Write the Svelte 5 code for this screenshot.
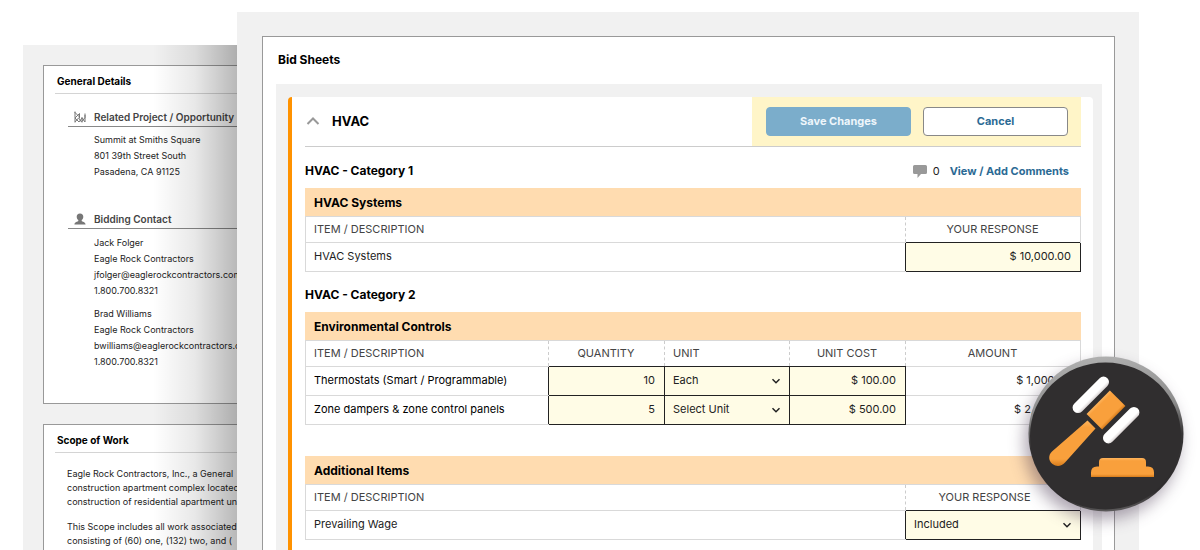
<script lang="ts">
  const contacts: { name: string; company: string; email: string; phone: string }[] = [
    {
      name: 'Jack Folger',
      company: 'Eagle Rock Contractors',
      email: 'jfolger@eaglerockcontractors.com',
      phone: '1.800.700.8321',
    },
    {
      name: 'Brad Williams',
      company: 'Eagle Rock Contractors',
      email: 'bwilliams@eaglerockcontractors.com',
      phone: '1.800.700.8321',
    },
  ]

  let controls = $state([
    {
      name: 'Thermostats (Smart / Programmable)',
      quantity: '10',
      unit: 'Each',
      cost: '$ 100.00',
      amount: '$ 1,000.00',
    },
    {
      name: 'Zone dampers & zone control panels',
      quantity: '5',
      unit: 'Select Unit',
      cost: '$ 500.00',
      amount: '$ 2,500.00',
    },
  ])

  let systemsResponse = $state('$ 10,000.00')
  let wage = $state('Included')
  let open = $state(true)
</script>

{#snippet chevron()}
  <svg class="chevron" viewBox="0 0 10 10" aria-hidden="true"><path d="M1.5 3.2 5 6.7l3.5-3.5" /></svg>
{/snippet}

<div class="page">
  <aside class="details">
    <section class="box general">
      <h2>General Details</h2>
      <div class="group">
        <h3>
          <svg class="icon" viewBox="0 0 12 12" aria-hidden="true">
            <path
              class="line"
              d="M1 .5v11M5.500 2.500v5M.5 1l5 5M5.500 2.500 1 7l4 4M5 6.500 1 11M5 7.500l2.500 3.500L11 6.500V2.500M8 6v5.500M5 11l3-4 3 4V4"
            />
          </svg>
          Related Project / Opportunity
        </h3>
        <address>
          <div>Summit at Smiths Square</div>
          <div>801 39th Street South</div>
          <div>Pasadena, CA 91125</div>
        </address>
      </div>
      <div class="group">
        <h3>
          <svg class="icon" viewBox="0 0 12 12" aria-hidden="true">
            <path
              d="M6 .5c2.200 0 3.300 1.400 3.300 3.200 0 1.500-.7 2.700-1.600 3.300v.9c.4.9 3.900.8 3.900 3.600H.4c0-2.800 3.500-2.700 3.900-3.600V7C3.400 6.400 2.700 5.200 2.700 3.700 2.700 1.900 3.800.5 6 .5z"
            />
          </svg>
          Bidding Contact
        </h3>
        {#each contacts as contact}
          <address>
            <div>{contact.name}</div>
            <div>{contact.company}</div>
            <div>{contact.email}</div>
            <div>{contact.phone}</div>
          </address>
        {/each}
      </div>
    </section>
    <section class="box scope">
      <h2>Scope of Work</h2>
      <p>
        Eagle Rock Contractors, Inc., a General<br />construction apartment complex located<br
        />construction of residential apartment units
      </p>
      <p>This Scope includes all work associated<br />consisting of (60) one, (132) two, and (</p>
    </section>
  </aside>

  <main class="sheets">
    <section class="box bid">
      <h1>Bid Sheets</h1>
      <div class="well">
        <div class="card">
          <header>
            <button class="toggle" type="button" aria-expanded={open} onclick={() => (open = !open)}>
              <svg viewBox="0 0 14 10" aria-hidden="true"><path d="M1.500 8 7 2.500 12.500 8" /></svg>
              HVAC
            </button>
            <div class="actions">
              <button class="btn save" type="button">Save Changes</button>
              <button class="btn" type="button">Cancel</button>
            </div>
          </header>

          {#if open}
            <div class="category">
              <h4>HVAC - Category 1</h4>
              <div class="comments">
                <svg viewBox="0 0 14 14" aria-hidden="true">
                  <path
                    d="M1.500 1h11A1.500 1.500 0 0 1 14 2.500v6a1.500 1.500 0 0 1-1.500 1.500H8l-3.500 4V10h-3A1.500 1.500 0 0 1 0 8.500v-6A1.500 1.500 0 0 1 1.500 1z"
                  />
                </svg>
                <span>0</span>
                <a href="#comments">View / Add Comments</a>
              </div>
            </div>
            <table>
              <colgroup><col /><col class="wide" /></colgroup>
              <thead>
                <tr class="title"><th colspan="2">HVAC Systems</th></tr>
                <tr class="labels"><th class="left">ITEM / DESCRIPTION</th><th>YOUR RESPONSE</th></tr>
              </thead>
              <tbody>
                <tr>
                  <td class="name">HVAC Systems</td>
                  <td class="field"><input aria-label="HVAC Systems response" bind:value={systemsResponse} /></td>
                </tr>
              </tbody>
            </table>

            <div class="category">
              <h4>HVAC - Category 2</h4>
            </div>
            <table>
              <colgroup>
                <col /><col class="narrow" /><col class="unit" /><col class="narrow" /><col class="wide" />
              </colgroup>
              <thead>
                <tr class="title"><th colspan="5">Environmental Controls</th></tr>
                <tr class="labels">
                  <th class="left">ITEM / DESCRIPTION</th>
                  <th>QUANTITY</th>
                  <th class="left">UNIT</th>
                  <th>UNIT COST</th>
                  <th>AMOUNT</th>
                </tr>
              </thead>
              <tbody>
                {#each controls as item}
                  <tr>
                    <td class="name strong">{item.name}</td>
                    <td class="field"><input aria-label="Quantity" bind:value={item.quantity} /></td>
                    <td class="field">
                      <div class="select">
                        <select aria-label="Unit" bind:value={item.unit}>
                          <option>Select Unit</option>
                          <option>Each</option>
                        </select>
                        {@render chevron()}
                      </div>
                    </td>
                    <td class="field"><input aria-label="Unit cost" bind:value={item.cost} /></td>
                    <td class="amount">{item.amount}</td>
                  </tr>
                {/each}
              </tbody>
            </table>

            <table class="additional">
              <colgroup><col /><col class="wide" /></colgroup>
              <thead>
                <tr class="title"><th colspan="2">Additional Items</th></tr>
                <tr class="labels"><th class="left">ITEM / DESCRIPTION</th><th>YOUR RESPONSE</th></tr>
              </thead>
              <tbody>
                <tr>
                  <td class="name">Prevailing Wage</td>
                  <td class="field">
                    <div class="select">
                      <select aria-label="Prevailing Wage response" bind:value={wage}>
                        <option>Included</option>
                      </select>
                      {@render chevron()}
                    </div>
                  </td>
                </tr>
              </tbody>
            </table>
          {/if}
        </div>
      </div>
    </section>
  </main>

  <svg class="badge" viewBox="0 0 156 156" aria-hidden="true">
    <defs>
      <linearGradient id="rim" x1="0.400" y1="0" x2="0.500" y2="1">
        <stop offset="0" stop-color="#b0b0b0" />
        <stop offset="0.350" stop-color="#8a8a8a" />
        <stop offset="0.550" stop-color="#353334" />
        <stop offset="0.900" stop-color="#2d2b2c" />
        <stop offset="1" stop-color="#5c5a5b" />
      </linearGradient>
      <linearGradient id="white" x1="0" y1="0" x2="0" y2="1">
        <stop offset="0" stop-color="#fff" />
        <stop offset="0.700" stop-color="#fff" />
        <stop offset="1" stop-color="#d8d2d2" />
      </linearGradient>
      <linearGradient id="orange" x1="0" y1="0" x2="0" y2="1">
        <stop offset="0" stop-color="#ffb55d" />
        <stop offset="0.150" stop-color="#f9a03c" />
        <stop offset="0.850" stop-color="#f9a03c" />
        <stop offset="1" stop-color="#d67c1c" />
      </linearGradient>
    </defs>
    <circle cx="78" cy="78" r="77.500" fill="url(#rim)" />
    <ellipse cx="77.500" cy="80" rx="75.500" ry="73.500" fill="#302e2f" />
    <g transform="rotate(-45 78 54)">
      <rect x="54.500" y="27" width="47" height="11" rx="5.500" fill="url(#white)" />
      <rect x="61.500" y="43" width="33" height="22" fill="url(#orange)" />
      <rect x="54.500" y="70" width="47" height="11" rx="5.500" fill="url(#white)" />
    </g>
    <path fill="url(#orange)" d="m59.500 64.500 8 8-30.500 34c-3.500 4-8.500 4.500-12.500 1.500s-4.500-9-.5-12.500z" />
    <path
      fill="url(#orange)"
      d="M75 102h39q4 0 4 4v4.500h2q6 0 6 6v4.500H63v-4.500q0-6 6-6h2V106q0-4 4-4z"
    />
  </svg>
</div>

<style>
  :global(body) {
    margin: 0;
    background: #fff;
  }
  * {
    box-sizing: border-box;
  }
  .page {
    position: relative;
    display: flex;
    height: 100vh;
    overflow: hidden;
    font-family: Inter, 'Liberation Sans', sans-serif;
    font-size: 11px;
    line-height: 16px;
    color: #222;
  }
  h1,
  h2,
  h3,
  h4,
  p {
    margin: 0;
  }
  .box {
    background: #fff;
    border: 1px solid #999;
  }
  .details {
    position: relative;
    flex: 0 0 214px;
    margin: 45px 0 0 23px;
    padding: 20px 0 0 20px;
    overflow: hidden;
    background: #f1f1f1;
    font-size: 9px;
    white-space: nowrap;
  }
  .details::after {
    content: '';
    position: absolute;
    inset: 0 0 0 auto;
    width: 84px;
    background: linear-gradient(to right, transparent, rgba(0, 0, 0, 0.09) 50%, rgba(0, 0, 0, 0.28));
  }
  .details .box {
    margin-bottom: 20px;
    padding: 6px 0 0 11px;
    border-right: 0;
  }
  .details .general {
    padding-bottom: 26px;
  }
  .details .scope {
    padding-bottom: 80px;
  }
  .details h2 {
    padding: 1px 2px 4px;
    border-bottom: 1px solid #d4d4d4;
    font-size: 10px;
    font-weight: 700;
    color: #000;
  }
  .group {
    margin: 14px 0 0 13px;
  }
  .group + .group {
    margin-top: 30px;
  }
  .group h3 {
    display: flex;
    align-items: center;
    gap: 8px;
    height: 19px;
    margin-bottom: 5px;
    padding-left: 6px;
    border-bottom: 1px solid #888;
    font-size: 10px;
    font-weight: 600;
    color: #444;
  }
  .group + .group h3 {
    margin-bottom: 6px;
  }
  .icon {
    width: 12px;
    height: 12px;
    fill: #777;
  }
  .icon .line {
    fill: none;
    stroke: #777;
  }
  address {
    margin-bottom: 7px;
    padding-left: 26px;
    font-style: normal;
  }
  .scope p {
    margin: 14px 0 0 12px;
    line-height: 14px;
  }
  .scope p + p {
    margin-top: 11px;
  }
  .sheets {
    flex: 1;
    min-width: 0;
    margin: 12px 61px 0 0;
    padding: 24px 24px 0 25px;
    background: #f1f1f1;
  }
  .bid {
    padding: 15px 12px 12px 13px;
  }
  .bid h1 {
    padding-left: 2px;
    font-size: 12px;
    font-weight: 700;
    color: #000;
  }
  .well {
    margin-top: 16px;
    padding: 13px 9px 12px 12px;
    background: #f1f1f1;
  }
  .card {
    padding: 0 12px 40px 13px;
    background: #fff;
    border-left: 4px solid #ff9200;
    border-radius: 4px;
  }
  .card header {
    display: flex;
    justify-content: space-between;
    height: 50px;
    margin-bottom: 1px;
    border-bottom: 1px solid #ccc;
  }
  button {
    font: inherit;
    cursor: pointer;
  }
  .toggle {
    display: flex;
    align-items: center;
    gap: 12px;
    padding: 0 1px 2px;
    border: 0;
    background: none;
    font-size: 13px;
    font-weight: 700;
    color: #000;
  }
  .toggle svg {
    width: 14px;
    height: 10px;
    fill: none;
    stroke: #999;
    stroke-width: 2;
  }
  .actions {
    display: flex;
    align-items: center;
    gap: 12px;
    padding: 0 13px 0 14px;
    background: #fff5c8;
  }
  .btn {
    width: 145px;
    height: 29px;
    padding: 0 0 2px;
    border: 1px solid #888;
    border-radius: 4px;
    background: #fff;
    font-weight: 700;
    color: #2b6a94;
  }
  .save {
    border-color: #7badcb;
    background: #7badcb;
    color: #eef6fb;
  }
  .category {
    display: flex;
    align-items: center;
    justify-content: space-between;
    height: 40px;
    padding: 6px 12px 0 0;
  }
  h4 {
    font-size: 12px;
    font-weight: 700;
    color: #000;
  }
  .comments {
    display: flex;
    align-items: center;
    gap: 6px;
  }
  .comments svg {
    width: 14px;
    height: 14px;
    fill: #999;
  }
  .comments a {
    margin-left: 4px;
    font-weight: 700;
    color: #2b6a94;
    text-decoration: none;
  }
  table {
    width: 100%;
    table-layout: fixed;
    border-collapse: collapse;
  }
  .additional {
    margin-top: 31px;
  }
  .wide {
    width: 175px;
  }
  .narrow {
    width: 116px;
  }
  .unit {
    width: 125px;
  }
  th,
  td {
    padding: 0 9px 2px 8px;
  }
  .title th {
    height: 28px;
    padding-bottom: 0;
    border: 1px solid #ffdcb0;
    border-bottom-color: #d9d9d9;
    background: #ffdcb0;
    font-size: 12px;
    font-weight: 700;
    text-align: left;
    color: #000;
  }
  .labels th {
    height: 26px;
    border-left: 1px dashed #ccc;
    font-weight: 400;
    color: #444;
  }
  .labels th:first-child {
    border-left: 1px solid #d9d9d9;
  }
  .labels th:last-child {
    border-right: 1px solid #d9d9d9;
  }
  .additional .labels th:last-child {
    padding-right: 25px;
  }
  .labels .left {
    text-align: left;
  }
  td {
    height: 29px;
    border-top: 1px solid #d9d9d9;
    border-bottom: 1px solid #d9d9d9;
  }
  .name {
    border-left: 1px solid #d9d9d9;
  }
  .strong {
    color: #000;
  }
  .amount {
    border-right: 1px solid #d9d9d9;
    text-align: right;
  }
  .field {
    padding: 0;
    border: 1px solid #222;
    background: #fffce6;
  }
  input,
  select {
    display: block;
    width: 100%;
    height: 28px;
    margin: 0;
    padding: 0 9px 2px 8px;
    border: 0;
    border-radius: 0;
    background: transparent;
    font: inherit;
    color: #222;
  }
  input {
    text-align: right;
  }
  .select {
    display: grid;
    align-items: center;
  }
  select,
  .chevron {
    grid-area: 1 / 1;
  }
  select {
    appearance: none;
  }
  .chevron {
    justify-self: end;
    width: 10px;
    height: 10px;
    margin-right: 8px;
    fill: none;
    stroke: #222;
    stroke-width: 1.500;
    pointer-events: none;
  }
  .badge {
    position: absolute;
    right: 16px;
    bottom: 38px;
    width: 156px;
    height: 156px;
    filter: drop-shadow(-4px 8px 8px rgba(50, 30, 60, 0.4));
  }
</style>
